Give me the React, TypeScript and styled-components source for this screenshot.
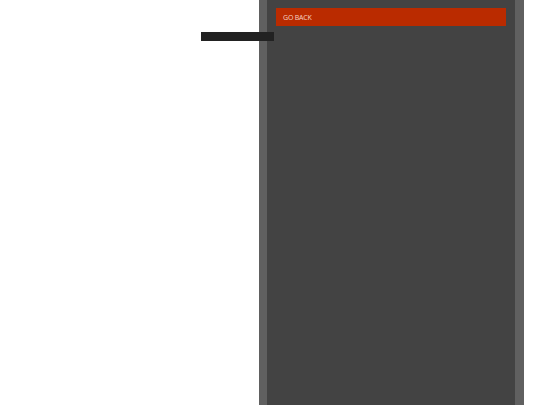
import React from "react";
import styled, { createGlobalStyle } from "styled-components";

const GlobalStyle = createGlobalStyle`
  html, body {
    margin: 0;
    padding: 0;
    background: #fff;
    font-family: "Open Sans", "Liberation Sans", sans-serif;
  }
`;

const SPage = styled.div`
  position: relative;
  display: flex;
  width: 540px;
  height: 405px;
  overflow: hidden;
`;

const SSpacer = styled.div`
  width: 259px;
  flex-shrink: 0;
`;

const SPanel = styled.aside`
  box-sizing: border-box;
  width: 265px;
  height: 100%;
  border-left: 8px solid #606060;
  border-right: 9px solid #606060;
  background-color: #434343;
  padding: 8px 9px;
`;

const SBackButton = styled.button`
  display: block;
  width: 100%;
  height: 18px;
  border: none;
  outline: none;
  margin: 0;
  padding: 0 7px;
  text-align: left;
  background-color: #ba2b00;
  color: #f6d2c4;
  font-family: "Open Sans", "Liberation Sans", sans-serif;
  font-weight: 400;
  font-size: 7px;
  letter-spacing: -0.2px;
  cursor: pointer;
`;

const SHandle = styled.div`
  position: absolute;
  left: 201px;
  top: 32px;
  width: 73px;
  height: 9px;
  background-color: #222222;
`;

export default function App() {
  return (
    <>
      <GlobalStyle />
      <SPage>
        <SSpacer />
        <SPanel>
          <SBackButton type="button">GO BACK</SBackButton>
        </SPanel>
        <SHandle />
      </SPage>
    </>
  );
}
